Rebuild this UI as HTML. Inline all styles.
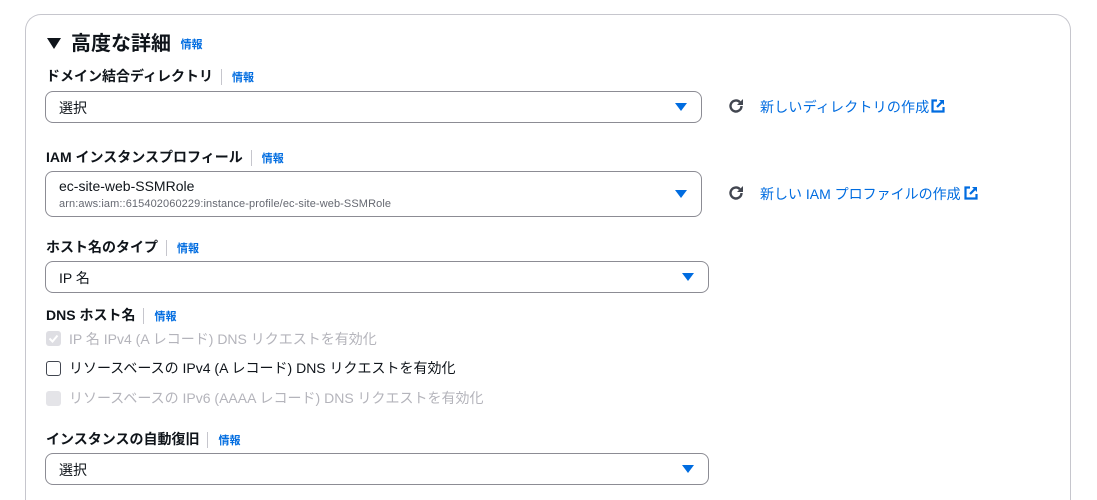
<!DOCTYPE html>
<html style="height:500px;overflow:hidden"><head><meta charset="utf-8"><style>
*{box-sizing:border-box;margin:0;padding:0}
body{width:1097px;height:500px;overflow:hidden;background:#fff;font-family:"Liberation Sans","Noto Sans CJK JP",sans-serif;color:#0f141a;position:relative}
.card{position:absolute;left:25px;top:14px;width:1046px;height:486px;border:1px solid #c6c6cd;border-bottom:none;border-radius:16px 16px 0 0}
.a{position:absolute;white-space:nowrap}
.lbl{font-size:14px;font-weight:bold;line-height:18px}
.info{font-size:11px;font-weight:bold;color:#006ce0}
.sep{display:inline-block;width:1px;height:16px;background:#c6c6cd;vertical-align:middle;margin:0 10px 0 8px}
.sel{position:absolute;left:45px;border:1px solid #8c8c94;border-radius:8px;font-size:14px}
.arr{position:absolute;right:14px;width:0;height:0;border-left:6px solid transparent;border-right:6px solid transparent;border-top:8px solid #006ce0}
.link{font-size:14px;color:#006ce0}
.cb{position:absolute;left:46px;width:15px;height:15px;border-radius:3px}
.t{font-size:14px;line-height:18px}
</style></head><body>
<div class="card"></div>
<div class="a" style="left:47px;top:38px;width:0;height:0;border-left:7px solid transparent;border-right:7px solid transparent;border-top:11px solid #0f141a"></div>
<div class="a" style="left:71px;top:31px;font-size:20px;font-weight:bold;line-height:26px">高度な詳細 <span class="info" style="margin-left:4px;vertical-align:2px">情報</span></div>

<div class="a lbl" style="left:46px;top:67px">ドメイン結合ディレクトリ<span class="sep"></span><span class="info">情報</span></div>
<div class="sel" style="top:91px;width:657px;height:32px"><span class="a" style="left:13px;top:6px">選択</span><div class="arr" style="top:11px"></div></div>
<svg class="a" style="left:727px;top:97px" width="18" height="18" viewBox="0 0 18 18"><path d="M14.5 9a5.5 5.5 0 1 1-1.6-3.9" fill="none" stroke="#424650" stroke-width="2.4"/><path d="M16 2v6h-6z" fill="#424650"/></svg>
<div class="a link" style="left:760px;top:97px;letter-spacing:0.2px">新しいディレクトリの作成</div>
<svg class="a" style="left:931px;top:99px" width="14" height="14" viewBox="0 0 14 14"><path d="M6 1.5H1.5v11h11V8" fill="none" stroke="#006ce0" stroke-width="2.2"/><path d="M8 1h5v5z" fill="#006ce0"/><path d="M12 2L6 8" stroke="#006ce0" stroke-width="2.2"/></svg>

<div class="a lbl" style="left:46px;top:148px">IAM インスタンスプロフィール<span class="sep"></span><span class="info">情報</span></div>
<div class="sel" style="top:171px;width:657px;height:46px"><span class="a" style="left:13px;top:6px">ec-site-web-SSMRole</span><span class="a" style="left:13px;top:26px;font-size:11px;color:#656871;letter-spacing:0.1px">arn:aws:iam::615402060229:instance-profile/ec-site-web-SSMRole</span><div class="arr" style="top:18px"></div></div>
<svg class="a" style="left:727px;top:184px" width="18" height="18" viewBox="0 0 18 18"><path d="M14.5 9a5.5 5.5 0 1 1-1.6-3.9" fill="none" stroke="#424650" stroke-width="2.4"/><path d="M16 2v6h-6z" fill="#424650"/></svg>
<div class="a link" style="left:760px;top:184px">新しい IAM プロファイルの作成</div>
<svg class="a" style="left:964px;top:186px" width="14" height="14" viewBox="0 0 14 14"><path d="M6 1.5H1.5v11h11V8" fill="none" stroke="#006ce0" stroke-width="2.2"/><path d="M8 1h5v5z" fill="#006ce0"/><path d="M12 2L6 8" stroke="#006ce0" stroke-width="2.2"/></svg>

<div class="a lbl" style="left:46px;top:238px">ホスト名のタイプ<span class="sep"></span><span class="info">情報</span></div>
<div class="sel" style="top:261px;width:664px;height:32px"><span class="a" style="left:13px;top:6px">IP 名</span><div class="arr" style="top:11px"></div></div>

<div class="a lbl" style="left:46px;top:306px">DNS ホスト名<span class="sep"></span><span class="info">情報</span></div>
<div class="cb" style="top:331px;background:#dedee3"><svg width="15" height="15"><path d="M3.5 7.5l3 3 5-6" fill="none" stroke="#fff" stroke-width="2"/></svg></div>
<div class="a t" style="left:69px;top:330px;color:#b4b4bb">IP 名 IPv4 (A レコード) DNS リクエストを有効化</div>
<div class="cb" style="top:361px;border:1.5px solid #424650"></div>
<div class="a t" style="left:69px;top:359px">リソースベースの IPv4 (A レコード) DNS リクエストを有効化</div>
<div class="cb" style="top:391px;background:#e4e4e8"></div>
<div class="a t" style="left:69px;top:389px;color:#b4b4bb">リソースベースの IPv6 (AAAA レコード) DNS リクエストを有効化</div>

<div class="a lbl" style="left:46px;top:430px">インスタンスの自動復旧<span class="sep"></span><span class="info">情報</span></div>
<div class="sel" style="top:453px;width:664px;height:32px"><span class="a" style="left:13px;top:6px">選択</span><div class="arr" style="top:11px"></div></div>
</body></html>
